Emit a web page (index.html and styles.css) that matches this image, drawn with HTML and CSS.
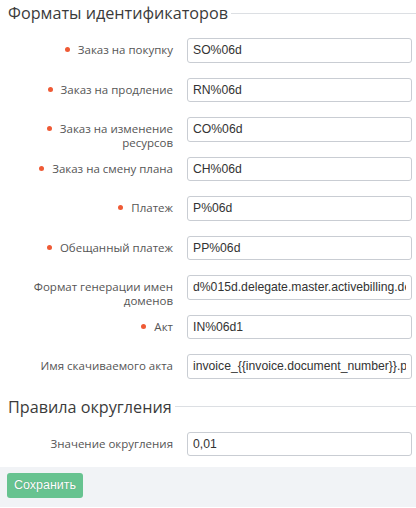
FILE: index.html
```html
<!DOCTYPE html>
<html lang="ru">
<head>
    <meta charset="UTF-8">
    <title>Форматы идентификаторов</title>
    <link rel="stylesheet" href="styles.css">
</head>
<body>
<form class="settings">
    <div class="legend"><span>Форматы идентификаторов</span></div>

    <div class="row">
        <label class="req">Заказ на покупку</label>
        <input type="text" value="SO%06d">
    </div>
    <div class="row">
        <label class="req">Заказ на продление</label>
        <input type="text" value="RN%06d">
    </div>
    <div class="row">
        <label class="req">Заказ на изменение ресурсов</label>
        <input type="text" value="CO%06d">
    </div>
    <div class="row">
        <label class="req">Заказ на смену плана</label>
        <input type="text" value="CH%06d">
    </div>
    <div class="row">
        <label class="req">Платеж</label>
        <input type="text" value="P%06d">
    </div>
    <div class="row">
        <label class="req">Обещанный платеж</label>
        <input type="text" value="PP%06d">
    </div>
    <div class="row">
        <label>Формат генерации имен доменов</label>
        <input type="text" value="d%015d.delegate.master.activebilling.demo">
    </div>
    <div class="row">
        <label class="req">Акт</label>
        <input type="text" value="IN%06d1">
    </div>
    <div class="row">
        <label>Имя скачиваемого акта</label>
        <input type="text" value="invoice_{{invoice.document_number}}.pdf">
    </div>

    <div class="legend"><span>Правила округления</span></div>

    <div class="row">
        <label>Значение округления</label>
        <input type="text" value="0,01">
    </div>

    <div class="footer">
        <button type="button" class="btn-save">Сохранить</button>
    </div>
</form>
</body>
</html>
```

FILE: styles.css
```css
* {
    margin: 0;
    padding: 0;
    box-sizing: border-box;
}
body {
    background: #fff;
    font-family: "Open Sans", "Noto Sans", sans-serif;
    color: #333;
}
.settings {
    width: 416px;
}
.legend {
    display: flex;
    align-items: center;
    height: 26px;
    padding-left: 8px;
    margin-bottom: 12px;
    font-size: 16.2px;
    color: #3b3b3b;
}
.legend::after {
    content: "";
    flex: 1;
    height: 1px;
    margin-left: 3px;
    background-color: #dcdfe3;
}
.row {
    display: flex;
    height: 24.5px;
    margin-bottom: 15px;
}
.row label {
    width: 173px;
    padding-left: 22px;
    padding-top: 5px;
    text-align: right;
    font-size: 11.5px;
    line-height: 14px;
    color: #555;
}
.req::before {
    content: "";
    display: inline-block;
    width: 5px;
    height: 5px;
    border-radius: 50%;
    background-color: #ef5a35;
    margin-right: 8px;
    vertical-align: 2px;
}
.row input {
    margin-left: 14px;
    width: 225px;
    height: 24.5px;
    padding: 0 5px;
    border: 1px solid #c9cdd3;
    border-radius: 3px;
    font-family: "Liberation Sans", Arial, sans-serif;
    font-size: 12.2px;
    color: #333;
    outline: none;
}
.footer {
    margin-top: -4px;
    height: 40px;
    padding: 5px 7px;
    background-color: #f1f3f6;
}
.btn-save {
    width: 76px;
    height: 25px;
    border: none;
    border-radius: 3px;
    background-color: #67c390;
    color: #fff;
    font-family: "Liberation Sans", Arial, sans-serif;
    font-size: 12.5px;
    text-shadow: 0 0 1px rgba(0, 0, 0, 0.25);
    cursor: pointer;
}
```
